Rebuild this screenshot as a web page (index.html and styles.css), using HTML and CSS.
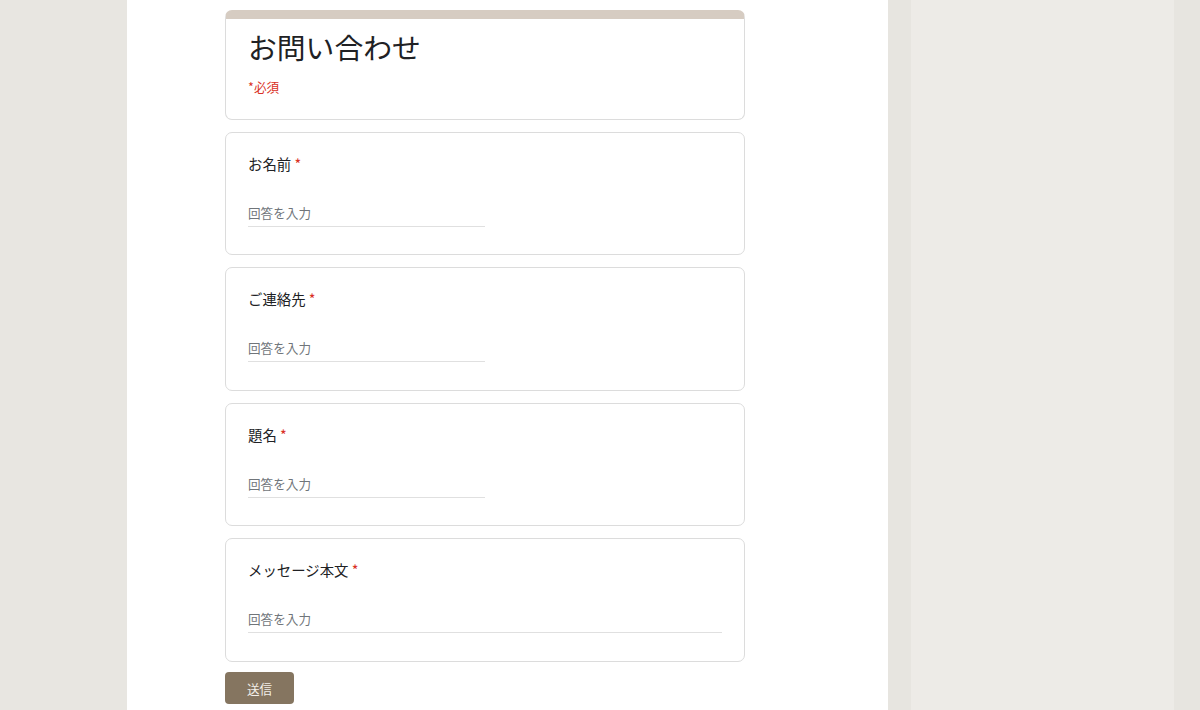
FILE: index.html
```html
<!DOCTYPE html>
<html lang="ja">
<head>
<meta charset="utf-8">
<title>お問い合わせ</title>
<link rel="stylesheet" href="styles.css">
</head>
<body>
<div class="page">
  <div class="gutter-left"></div>
  <main class="column">
    <form class="form">
      <section class="card header-card">
        <h1 class="title">お問い合わせ</h1>
        <p class="required-note">*必須</p>
      </section>
      <section class="card question">
        <div class="label">お名前 <span class="star">*</span></div>
        <div class="input half">回答を入力</div>
      </section>
      <section class="card question">
        <div class="label">ご連絡先 <span class="star">*</span></div>
        <div class="input half">回答を入力</div>
      </section>
      <section class="card question">
        <div class="label">題名 <span class="star">*</span></div>
        <div class="input half">回答を入力</div>
      </section>
      <section class="card question">
        <div class="label">メッセージ本文 <span class="star">*</span></div>
        <div class="input full">回答を入力</div>
      </section>
      <div class="actions">
        <button type="button" class="submit">送信</button>
      </div>
    </form>
  </main>
  <div class="gap-right"></div>
  <aside class="side-panel"></aside>
  <div class="edge-right"></div>
</div>
</body>
</html>
```
FILE: styles.css
```css
* { box-sizing: border-box; }
html, body {
  margin: 0;
  padding: 0;
  height: 100%;
  background: #e8e6e1;
  font-family: "Noto Sans CJK JP", "Noto Sans", sans-serif;
  color: #202124;
  overflow: hidden;
}
.page {
  display: flex;
  height: 710px;
}
.gutter-left { width: 127px; flex: none; background: #e8e6e1; }
.column {
  width: 761px;
  flex: none;
  background: #ffffff;
  padding: 9.5px 0 0 98px;
}
.gap-right { width: 23px; flex: none; background: #e7e5e0; }
.side-panel { width: 263px; flex: none; background: #edebe7; }
.edge-right { flex: 1; background: #e7e5e0; }

.form {
  width: 520px;
  display: flex;
  flex-direction: column;
  gap: 12px;
}
.card {
  background: #fff;
  border: 1px solid #dcdcdc;
  border-radius: 7px;
}
.header-card {
  border-top: 9px solid #d6ccc2;
  padding: 10px 22px 22px;
  height: 110.5px;
}
.title {
  margin: 0;
  font-size: 28.8px;
  font-weight: 400;
  line-height: 36px;
  color: #202124;
}
.required-note {
  margin: 13px 0 0;
  font-size: 12.6px;
  line-height: 18px;
  color: #d93025;
}
.question {
  padding: 21px 22px 0;
  height: 123.4px;
}
.label {
  font-size: 14.4px;
  font-weight: 400;
  line-height: 20px;
  color: #202124;
}
.star {
  color: #d93025;
}
.input {
  margin-top: 29px;
  font-size: 12.6px;
  line-height: 20px;
  color: #70757a;
  padding-bottom: 3px;
  border-bottom: 1px solid #e0e0e0;
}
.input.half { width: 237px; }
.input.full { width: 100%; }

.actions {
  margin-top: -1.5px;
}
.submit {
  width: 69px;
  height: 32px;
  border: none;
  border-radius: 4px;
  background: #857560;
  color: #f3efe9;
  font-family: "Noto Sans CJK JP", "Noto Sans", sans-serif;
  font-size: 12.6px;
  padding: 0;
  cursor: pointer;
}
```
